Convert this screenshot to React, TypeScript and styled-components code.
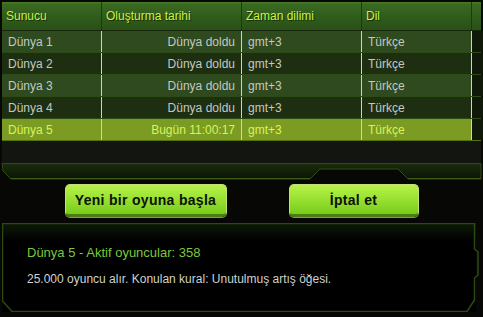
import styled, { createGlobalStyle } from "styled-components";

const GlobalStyle = createGlobalStyle`
  html, body {
    margin: 0;
    padding: 0;
    background: #070806;
  }
  body {
    font-family: "Liberation Sans", Arial, sans-serif;
  }
`;

const Screen = styled.div`
  width: 483px;
  height: 317px;
  background: #070806;
  display: flex;
  flex-direction: column;
  overflow: hidden;
`;

const TableWrap = styled.div`
  margin: 2px 2px 0 2px;
  background: #131510;
  height: 161px;
  display: flex;
  flex-direction: column;
`;

const columns = "100px 140px 120px 110px 9px";

const HeaderRow = styled.div`
  display: grid;
  grid-template-columns: ${columns};
  height: 29px;
  background: linear-gradient(#4d7f2c 0px, #3a6a22 2px, #2f5a1b 60%, #2a5016 100%);
  border-bottom: 1px solid #16260a;
  box-sizing: border-box;
`;

const HeadCell = styled.div`
  display: flex;
  align-items: center;
  padding-left: 4px;
  font-size: 12px;
  color: #c8f23e;
  text-shadow: 1px 1px 0 #1a300a;
  border-right: 1px solid #1f3a0e;
  &:last-child {
    border-right: none;
  }
`;

const Row = styled.div<{ $variant: "odd" | "even" | "active" }>`
  display: grid;
  grid-template-columns: ${columns};
  height: 22px;
  box-sizing: border-box;
  border-bottom: 1px solid
    ${(p) => (p.$variant === "active" ? "#56720f" : "#2c4a14")};
  background: ${(p) =>
    p.$variant === "active"
      ? "#7b9b22"
      : p.$variant === "odd"
      ? "#2e4a1e"
      : "#1d2f10"};
  color: ${(p) => (p.$variant === "active" ? "#d8f45c" : "#c4c8c4")};
`;

const Cell = styled.div<{ $right?: boolean }>`
  display: flex;
  align-items: center;
  justify-content: ${(p) => (p.$right ? "flex-end" : "flex-start")};
  padding: 0 6px 0 6px;
  font-size: 12px;
  border-right: 1px solid #cfd2cc;
  white-space: nowrap;
  &:last-child {
    border-right: none;
    background: #10180a;
  }
`;

const Band = styled.svg`
  display: block;
  flex: none;
`;

const ButtonBar = styled.div`
  display: flex;
  justify-content: center;
  gap: 62px;
  padding-top: 4px;
  height: 33px;
`;

const GreenButton = styled.button<{ $w: number }>`
  width: ${(p) => p.$w}px;
  height: 33px;
  border: 1px solid #c4e070;
  border-bottom: 3px solid #4d7c12;
  border-radius: 5px;
  background: linear-gradient(#b8f24a 0%, #9ee436 40%, #78cc1a 100%);
  box-shadow: 0 1px 0 #8a9a50;
  font-family: "Liberation Sans", Arial, sans-serif;
  font-weight: bold;
  font-size: 14px;
  letter-spacing: 0.3px;
  color: #0c1204;
  padding: 0;
  cursor: pointer;
`;

const Panel = styled.div`
  position: relative;
  margin: 6px 0 0 2px;
  width: 474px;
  height: 89px;
  box-sizing: border-box;
  padding: 22px 0 0 25px;
  background: linear-gradient(#0e1a08 0px, #000 18px, #000 100%);
`;

const PanelFrame = styled.svg`
  position: absolute;
  left: 0;
  top: 0;
  pointer-events: none;
`;

const Title = styled.div`
  font-size: 13px;
  line-height: 15px;
  color: #7cc83a;
  margin-bottom: 12px;
`;

const Desc = styled.div`
  font-size: 12px;
  line-height: 14px;
  color: #d0d2cc;
`;

const rows = [
  { name: "Dünya 1", date: "Dünya doldu" },
  { name: "Dünya 2", date: "Dünya doldu" },
  { name: "Dünya 3", date: "Dünya doldu" },
  { name: "Dünya 4", date: "Dünya doldu" },
  { name: "Dünya 5", date: "Bugün 11:00:17" },
];

const App = () => {
  return (
    <Screen>
      <GlobalStyle />
      <TableWrap>
        <HeaderRow>
          <HeadCell>Sunucu</HeadCell>
          <HeadCell>Oluşturma tarihi</HeadCell>
          <HeadCell>Zaman dilimi</HeadCell>
          <HeadCell>Dil</HeadCell>
          <HeadCell />
        </HeaderRow>
        {rows.map((r, i) => (
          <Row
            key={r.name}
            $variant={i === 4 ? "active" : i % 2 === 0 ? "odd" : "even"}
          >
            <Cell>{r.name}</Cell>
            <Cell $right>{r.date}</Cell>
            <Cell>gmt+3</Cell>
            <Cell>Türkçe</Cell>
            <Cell />
          </Row>
        ))}
      </TableWrap>
      <Band width="483" height="17" viewBox="0 0 483 17">
        <defs>
          <linearGradient id="bandFill" x1="0" y1="0" x2="0" y2="1">
            <stop offset="0" stopColor="#1a2c0c" />
            <stop offset="1" stopColor="#0c1406" />
          </linearGradient>
        </defs>
        <path
          d="M2 0.5 H481 V16 H408 L398 6 H320 L310 16 H11 L3 8 Z"
          fill="url(#bandFill)"
          stroke="#2f4c12"
          strokeWidth="1"
        />
        <path d="M11 15.5 H310" stroke="#3a5a16" strokeWidth="1" />
        <path d="M408 15.5 H481" stroke="#3a5a16" strokeWidth="1" />
      </Band>
      <ButtonBar>
        <GreenButton $w={162}>Yeni bir oyuna başla</GreenButton>
        <GreenButton $w={130}>İptal et</GreenButton>
      </ButtonBar>
      <Panel>
        <PanelFrame width="480" height="89" viewBox="0 0 480 89">
          <path
            d="M0.5 0.5 H472.5 V26 L476 29 V52 L472.5 55 V77 L465 88.5 H10 L0.5 78 Z"
            fill="none"
            stroke="#2c4a10"
            strokeWidth="1.5"
          />
        </PanelFrame>
        <Title>Dünya 5 - Aktif oyuncular: 358</Title>
        <Desc>25.000 oyuncu alır. Konulan kural: Unutulmuş artış öğesi.</Desc>
      </Panel>
    </Screen>
  );
};

export default App;
